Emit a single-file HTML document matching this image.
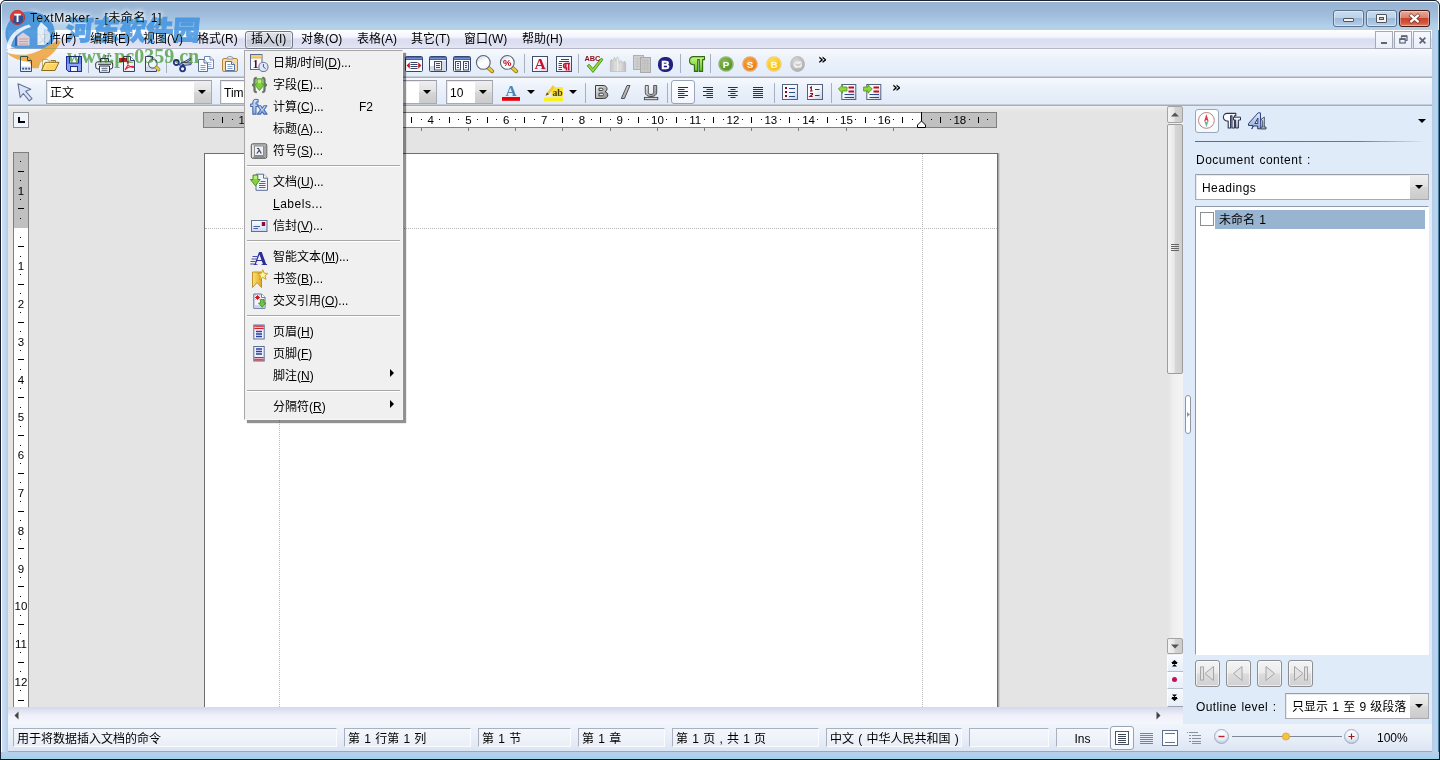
<!DOCTYPE html>
<html lang="zh-CN"><head><meta charset="utf-8"><title>TextMaker - [未命名 1]</title>
<style>
*{box-sizing:border-box;margin:0;padding:0}
html,body{width:1440px;height:760px;overflow:hidden}
body{position:relative;background:#fff;font-family:"Liberation Sans","Noto Sans CJK SC",sans-serif;font-size:12px;color:#000;line-height:1;word-spacing:.9px}
.a{position:absolute}
.t{position:absolute;white-space:nowrap;line-height:16px;height:16px}
u{text-decoration:underline;text-underline-offset:1px}
svg{position:absolute;overflow:visible}
#frame{left:0;top:0;width:1440px;height:760px;border-radius:6px 6px 0 0;background:#b9d3ee;overflow:hidden}
#titlebg{left:0;top:0;width:1440px;height:30px;background:linear-gradient(#1b2233 0,#1b2233 1px,#fdfeff 1px,#fdfeff 2px,#9fb5cf 2px,#98b4d3 4px,#9bb8d8 10px,#a3c0df 17px,#b0d0ec 26px,#b9d0e4 29px,#c0d0de 30px)}
#menubar{left:8px;top:30px;width:1424px;height:19px;background:linear-gradient(#ffffff 0,#f3f4fc 7px,#e9ebf6 8px,#dadef0 9px,#dcdff1 13px,#e4e5f5 18px,#b5b6c8 18px,#b5b6c8 19px)}
.mi{position:absolute;top:31px;height:17px;line-height:17px;white-space:nowrap}
#tb1{left:8px;top:49px;width:1424px;height:29px;background:linear-gradient(#f7fafe 0,#eef3fb 8px,#e6eefa 20px,#e3ecf9 27px,#a9adb8 28px,#a9adb8 29px)}
#tb2{left:8px;top:78px;width:1424px;height:28px;background:linear-gradient(#f6f9fe 0,#edf3fb 8px,#e5edf9 20px,#e2ebf8 26px,#a9adb8 27px,#a9adb8 28px)}
.sep{position:absolute;width:1px;background:#a8b0c0}
#doc{left:8px;top:106px;width:1159px;height:601px;background:linear-gradient(#f0f0f0 0,#e9e9e9 3px,#e4e4e4 6px);overflow:hidden}
.combo{position:absolute;background:#fff;border:1px solid #a8aab4;border-top-color:#9a9ca6;box-shadow:inset 1px 1px 0 #e9eaee}
.cbtn{position:absolute;background:linear-gradient(#efefef,#e2e2e2 48%,#d6d6d6 52%,#cbcbcb)}
.arr{position:absolute;width:0;height:0;border-left:4px solid transparent;border-right:4px solid transparent;border-top:4px solid #000}
</style></head>
<body>
<div id="frame" class="a"></div>
<div id="titlebg" class="a" style="border-radius:6px 6px 0 0"></div>
<div class="a" style="left:0;top:0;width:1440px;height:760px;border:1px solid #1b2233;border-radius:6px 6px 0 0;border-bottom:1px solid #10151c"></div>
<div class="a" style="left:1px;top:1px;width:1438px;height:757px;border:1px solid rgba(255,255,255,.75);border-bottom:none;border-radius:5px 5px 0 0"></div>
<div class="a" style="left:1px;top:30px;width:7px;height:722px;background:linear-gradient(90deg,#ffffff 0,#ffffff 1px,#cfe1f4 1px,#c3d9f0 4px,#b2cdea 7px)"></div>
<div class="a" style="left:1432px;top:30px;width:7px;height:722px;background:linear-gradient(90deg,#b3ceea 0,#b9d3ee 3px,#b6d1ed 6px,#4f7d9d 6px,#4f7d9d 7px)"></div>
<div class="a" style="left:1px;top:752px;width:1438px;height:7px;background:linear-gradient(#b9cfe9,#b2d0ec 3px,#9fd3f0 7px)"></div>
<div id="menubar" class="a"></div>
<div id="tb1" class="a"></div>
<div id="tb2" class="a"></div>
<div class="t" style="left:30px;top:10px;letter-spacing:.55px;text-shadow:0 0 6px #fff,0 0 6px #fff,0 0 4px #fff">TextMaker - [未命名 1]</div>

<div class="a" style="left:1333px;top:10px;width:31px;height:17px;border:1px solid #5b728f;border-radius:3px;background:linear-gradient(#c9dbee 0,#bdd2e9 45%,#9db9d8 50%,#b4cfea 100%);box-shadow:inset 0 0 0 1px rgba(255,255,255,.45)"></div>
<div class="a" style="left:1343px;top:18px;width:11px;height:4px;border:1px solid #50545c;border-radius:1px;background:#f4f4ec"></div>
<div class="a" style="left:1366px;top:10px;width:31px;height:17px;border:1px solid #5b728f;border-radius:3px;background:linear-gradient(#c9dbee 0,#bdd2e9 45%,#9db9d8 50%,#b4cfea 100%);box-shadow:inset 0 0 0 1px rgba(255,255,255,.45)"></div>
<div class="a" style="left:1376px;top:14px;width:11px;height:9px;border:1px solid #50545c;border-radius:1px;background:#f4f4f0"></div>
<div class="a" style="left:1379px;top:17px;width:5px;height:3px;border:1px solid #50545c;background:#b8c8dc"></div>
<div class="a" style="left:1399px;top:10px;width:31px;height:17px;border:1px solid #4a1a14;border-radius:3px;background:linear-gradient(#e9a99a 0,#dc8270 45%,#c8432b 50%,#d4573c 80%,#e0846a 100%);box-shadow:inset 0 0 0 1px rgba(255,255,255,.35)"></div>
<svg class="a" style="left:1408px;top:13px" width="13" height="11" viewBox="0 0 13 11"><path d="M3.200 2.700L9.800 8.300M9.800 2.700L3.200 8.300" stroke="#5a342e" stroke-width="3.800" stroke-linecap="square" opacity=".8"/><path d="M3.200 2.700L9.800 8.300M9.800 2.700L3.200 8.300" stroke="#ffffff" stroke-width="2.300" stroke-linecap="square"/></svg>

<div class="a" style="left:245px;top:31px;width:48px;height:18px;border:1px solid #6f7988;border-radius:3px;background:linear-gradient(#e2e4ec,#d3d6e1 50%,#c6cad7 50%,#cfd3df);box-shadow:inset 0 0 0 1px rgba(255,255,255,.55)"></div>
<div class="mi" style="left:37px">文件(F)</div>
<div class="mi" style="left:90px">编辑(E)</div>
<div class="mi" style="left:143px">视图(V)</div>
<div class="mi" style="left:197px">格式(R)</div>
<div class="mi" style="left:251px">插入(I)</div>
<div class="mi" style="left:301px">对象(O)</div>
<div class="mi" style="left:357px">表格(A)</div>
<div class="mi" style="left:411px">其它(T)</div>
<div class="mi" style="left:464px">窗口(W)</div>
<div class="mi" style="left:522px">帮助(H)</div>

<div class="a" style="left:1375px;top:31px;width:18px;height:18px;border:1px solid #a3a9b6;background:linear-gradient(#f6f8fd,#eaeef8)"></div>
<div class="a" style="left:1380.500px;top:42px;width:6px;height:2px;background:#5d6478"></div>
<div class="a" style="left:1394px;top:31px;width:18px;height:18px;border:1px solid #a3a9b6;background:linear-gradient(#f6f8fd,#eaeef8)"></div>
<svg class="a" style="left:1399px;top:35px" width="9" height="9" viewBox="0 0 9 9"><path d="M2.500 2.800V1H8V5.500H6.500" fill="none" stroke="#5d6478" stroke-width="1.200"/><path d="M2.500 1.200H8" stroke="#5d6478" stroke-width="1.800"/><rect x=".8" y="3.800" width="5.400" height="4.200" fill="none" stroke="#5d6478" stroke-width="1.200"/><path d="M.8 4.200H6.200" stroke="#5d6478" stroke-width="1.600"/></svg>
<div class="a" style="left:1413px;top:31px;width:18px;height:18px;border:1px solid #a3a9b6;background:linear-gradient(#f6f8fd,#eaeef8)"></div>
<svg class="a" style="left:1419px;top:37px" width="7" height="7" viewBox="0 0 7 7"><path d="M.6 .6L6.400 6.400M6.400 .6L.6 6.400" stroke="#5d6478" stroke-width="1.700"/></svg>

<div class="a" style="left:18px;top:56px;width:16px;height:16px"><svg width="16" height="16" viewBox="0 0 16 16" style="left:0;top:0;"><path d="M2.5 .5H9.5L13.5 4.5V15.5H2.5Z" fill="#fff" stroke="#34507c"/><path d="M9.5 .5V4.5H13.5" fill="#e8eef8" stroke="#34507c"/><path d="M3 10H13V15H3Z" fill="#e6edf9"/><rect x="4.2" y="11.6" width="2" height="2" fill="#3a5a9a"/><rect x="7.2" y="11.6" width="2" height="2" fill="#3a5a9a"/><rect x="10.2" y="11.6" width="2" height="2" fill="#3a5a9a"/></svg></div>
<div class="a" style="left:42px;top:56px;width:16px;height:16px"><svg width="16" height="16" viewBox="0 0 16 16" style="left:0;top:0;"><path d="M.5 14.5V3.5H5.5L6.5 5H11.5V7" fill="#fdfdfd" stroke="#b9a36a" stroke-width=".9"/><path d="M9 4.5H13.5V6" fill="#f6d77a" stroke="#8c6d1f" stroke-width=".9"/><path d="M-.5 14.5L3.2 6.3H17L13 14.5Z" fill="#ffd560" stroke="#8c6d1f" stroke-linejoin="round"/><path d="M2.5 12.5L4.6 7.6H14.5" fill="none" stroke="#ffeaa0" stroke-width="1"/></svg></div>
<div class="a" style="left:66px;top:56px;width:16px;height:16px"><svg width="16" height="16" viewBox="0 0 16 16" style="left:0;top:0;"><path d="M.5 .5H15.5V15.5H2.5L.5 13.5Z" fill="#6d87ea" stroke="#1c2d94" stroke-linejoin="round"/><path d="M1 8H15V15H3L1 13Z" fill="#8ea4f2"/><rect x="3.5" y=".5" width="9" height="6.5" fill="#fff" stroke="#1c2d94"/><rect x="4.5" y="10.5" width="7" height="5" fill="#e9edf8" stroke="#1c2d94"/><rect x="6" y="12" width="2.5" height="2.5" fill="#fff"/><path d="M.5 .5H15.5V15.5H2.5L.5 13.5Z" fill="none" stroke="#1c2d94" stroke-linejoin="round"/></svg></div>
<div class="sep" style="left:88px;top:54px;width:1px;height:19px;"></div>
<div class="a" style="left:96px;top:56px;width:16px;height:16px"><svg width="16" height="16" viewBox="0 0 16 16" style="left:0;top:0;"><rect x="9" y="-.8" width="1.4" height="1.4" fill="#2d3a44"/><rect x="11.4" y="-.8" width="1.4" height="1.4" fill="#2d3a44"/><rect x="13.8" y="-.8" width="1.4" height="1.4" fill="#2d3a44"/><path d="M4.5 6V2.5H12.5V6" fill="#fff" stroke="#26323c"/><rect x="-.3" y="5.8" width="17" height="7.2" rx="2.2" fill="#f4f6f8" stroke="#26323c"/><path d="M2 8.3H15" stroke="#3c4852" stroke-width="1.2"/><path d="M3.5 10H13.5V16.3H3.5Z" fill="#fff" stroke="#26323c"/><path d="M5.5 12.2H11.5M5.5 14.2H11.5" stroke="#4e5f86" stroke-width="1.1"/><circle cx="15" cy="7" r=".8" fill="#5aa040"/></svg></div>
<div class="a" style="left:120px;top:56px;width:16px;height:16px"><svg width="16" height="16" viewBox="0 0 16 16" style="left:0;top:0;"><path d="M3.5 .5H10.5L14.5 4.5V15.5H3.5Z" fill="#f6f0f4" stroke="#2f4668"/><path d="M10.5 .5V4.5H14.5" fill="#fff" stroke="#2f4668"/><rect x="-1" y="2" width="8" height="4" fill="#c8201c"/><path d="M5 14C7 11 8.5 8 8.3 6C8.2 5 7.2 5 7.3 6.2C7.6 9 10 11.5 13.2 11.4C14.2 11.2 13.8 10.3 12.6 10.4C9.8 10.6 6.5 12 5 14Z" fill="none" stroke="#d8283a" stroke-width="1.1"/></svg></div>
<div class="a" style="left:144px;top:56px;width:16px;height:16px"><svg width="16" height="16" viewBox="0 0 16 16" style="left:0;top:0;"><path d="M1.500 .5H8.500L12.500 4.500V15.500H1.500Z" fill="#eef0fa" stroke="#2f4668"/><path d="M8.500 .5V4.500H12.500" fill="#fff" stroke="#2f4668"/><path d="M2 10.500H12V15H2Z" fill="#d4d8f2"/><circle cx="8.800" cy="7.800" r="4.300" fill="#f0f7fb" stroke="#4a6a5c" stroke-width="1.100"/><path d="M12.300 11.300L14.600 13.600" stroke="#a88a20" stroke-width="3.600" stroke-linecap="round"/><path d="M12.500 11.500L14.500 13.500" stroke="#ecc83c" stroke-width="2.300" stroke-linecap="round"/></svg></div>
<div class="sep" style="left:166px;top:54px;width:1px;height:19px;"></div>
<div class="a" style="left:174px;top:56px;width:16px;height:16px"><svg width="16" height="16" viewBox="0 0 16 16" style="left:0;top:0;"><path d="M4.500 8.800L16.500 2.200L17 3.600L8 9.500Z" fill="#aab4d0" stroke="#2b3a78" stroke-width=".9" stroke-linejoin="round"/><path d="M7 6.300L17.300 7L17 8.600L9.500 9.500Z" fill="#c2cae0" stroke="#2b3a78" stroke-width=".9" stroke-linejoin="round"/><circle cx="2.300" cy="6.500" r="2.500" fill="#eef2fa" stroke="#23357e" stroke-width="1.800"/><circle cx="8.600" cy="12.800" r="2.500" fill="#eef2fa" stroke="#23357e" stroke-width="1.800"/><path d="M8.800 10.500L9.500 8" stroke="#23357e" stroke-width="1.800"/></svg></div>
<div class="a" style="left:198px;top:56px;width:16px;height:16px"><svg width="16" height="16" viewBox="0 0 16 16" style="left:0;top:0;"><path d="M6.500 .5H12L15.500 4V12.500H6.500Z" fill="#fbfcff" stroke="#6e86a8"/><path d="M12 .5V4H15.500" fill="#e8eef8" stroke="#6e86a8"/><path d="M8.500 6.500H13.500M8.500 8.500H13.500M8.500 10.500H13.500" stroke="#9fb3d4"/><path d="M.5 3.500H6L9.500 7V15.500H.5Z" fill="#fbfcff" stroke="#5a7296"/><path d="M6 3.500V7H9.500" fill="#e8eef8" stroke="#5a7296"/><path d="M2.500 9.500H7.500M2.500 11.500H7.500M2.500 13.500H7.500" stroke="#7f9ccc"/></svg></div>
<div class="a" style="left:222px;top:56px;width:16px;height:16px"><svg width="16" height="16" viewBox="0 0 16 16" style="left:0;top:0;"><rect x=".5" y="2.500" width="15" height="13" rx="1.500" fill="#f6d9a6" stroke="#b4873c"/><path d="M5 3V1.500Q8 -1 11 1.500V3Z" fill="#e9edf4" stroke="#8a8f98" stroke-width=".9"/><path d="M3.500 5.500H9.500L12.500 8.500V14.500H3.500Z" fill="#fff" stroke="#5a7296"/><path d="M9.500 5.500V8.500H12.500" fill="#e8eef8" stroke="#5a7296"/><path d="M5.500 8.500H8.500M5.500 10.500H10.500M5.500 12.500H10.500" stroke="#7f9ccc"/></svg></div>
<div class="a" style="left:405px;top:56px;width:16px;height:16px"><svg width="18" height="16" viewBox="0 0 18 16" style="left:0;top:0;"><defs><linearGradient id="wt" x1="0" y1="0" x2="0" y2="1"><stop offset="0" stop-color="#3a56b0"/><stop offset="1" stop-color="#9ab0ee"/></linearGradient></defs><rect x=".5" y=".5" width="17" height="15" rx="1" fill="#fbfcfe" stroke="#33466e"/><rect x="1" y="1" width="16" height="2.500" fill="url(#wt)"/><path d="M1 3.500H17" stroke="#33466e" stroke-width=".8"/><path d="M5.500 6.500H12.500M5.500 8.500H12.500M5.500 10.500H12.500M5.500 12.500H12.500" stroke="#39466a" stroke-width="1"/><path d="M1.600 9.500L4.800 6.300V12.700Z" fill="#d0101c"/><path d="M16.400 9.500L13.200 6.300V12.700Z" fill="#d0101c"/></svg></div>
<div class="a" style="left:429px;top:56px;width:16px;height:16px"><svg width="18" height="16" viewBox="0 0 18 16" style="left:0;top:0;"><defs><linearGradient id="wt" x1="0" y1="0" x2="0" y2="1"><stop offset="0" stop-color="#3a56b0"/><stop offset="1" stop-color="#9ab0ee"/></linearGradient></defs><rect x=".5" y=".5" width="17" height="15" rx="1" fill="#fbfcfe" stroke="#33466e"/><rect x="1" y="1" width="16" height="2.500" fill="url(#wt)"/><path d="M1 3.500H17" stroke="#33466e" stroke-width=".8"/><path d="M1 10H5V15H1ZM13 5H17V15H13Z" fill="#d8dbe2"/><rect x="5.500" y="5.500" width="7" height="8.500" fill="#f4f5f8" stroke="#444e68"/><path d="M7 7.500H11M7 9.500H11M7 11.500H11" stroke="#444e68" stroke-width="1"/></svg></div>
<div class="a" style="left:453px;top:56px;width:16px;height:16px"><svg width="18" height="16" viewBox="0 0 18 16" style="left:0;top:0;"><defs><linearGradient id="wt" x1="0" y1="0" x2="0" y2="1"><stop offset="0" stop-color="#3a56b0"/><stop offset="1" stop-color="#9ab0ee"/></linearGradient></defs><rect x=".5" y=".5" width="17" height="15" rx="1" fill="#fbfcfe" stroke="#33466e"/><rect x="1" y="1" width="16" height="2.500" fill="url(#wt)"/><path d="M1 3.500H17" stroke="#33466e" stroke-width=".8"/><rect x="2.500" y="5.500" width="5" height="8.500" fill="#f4f5f8" stroke="#444e68"/><rect x="10.500" y="5.500" width="5" height="8.500" fill="#f4f5f8" stroke="#444e68"/><path d="M4 7.500H6M4 9.500H6M4 11.500H6M12 7.500H14M12 9.500H14M12 11.500H14" stroke="#444e68" stroke-width="1"/></svg></div>
<div class="a" style="left:477px;top:56px;width:16px;height:16px"><svg width="18" height="18" viewBox="0 0 18 18" style="left:0;top:0;left:-1px;top:-1px"><defs><linearGradient id="lg" x1="0" y1="0" x2="0.600" y2="1"><stop offset="0" stop-color="#c4d4e4"/><stop offset=".55" stop-color="#ffffff"/><stop offset="1" stop-color="#f4f8fc"/></linearGradient></defs><path d="M12 12.500L16.200 16.200" stroke="#8a7420" stroke-width="4" stroke-linecap="round"/><path d="M12.300 12.800L16 16" stroke="#e8c838" stroke-width="2.600" stroke-linecap="round"/><circle cx="7.300" cy="7.400" r="6.900" fill="url(#lg)" stroke="#5a6470" stroke-width="1.100"/></svg></div>
<div class="a" style="left:501px;top:56px;width:16px;height:16px"><svg width="18" height="18" viewBox="0 0 18 18" style="left:0;top:0;left:-1px;top:-1px"><defs><linearGradient id="lg" x1="0" y1="0" x2="0.600" y2="1"><stop offset="0" stop-color="#c4d4e4"/><stop offset=".55" stop-color="#ffffff"/><stop offset="1" stop-color="#f4f8fc"/></linearGradient></defs><path d="M12 12.500L16.200 16.200" stroke="#8a7420" stroke-width="4" stroke-linecap="round"/><path d="M12.300 12.800L16 16" stroke="#e8c838" stroke-width="2.600" stroke-linecap="round"/><circle cx="7.300" cy="7.400" r="6.900" fill="url(#lg)" stroke="#5a6470" stroke-width="1.100"/><text x="7.300" y="10.800" text-anchor="middle" font-family="Liberation Sans, sans-serif" font-weight="bold" font-size="9.500" fill="#c00818">%</text></svg></div>
<div class="sep" style="left:524px;top:54px;width:1px;height:19px;"></div>
<div class="a" style="left:532px;top:56px;width:16px;height:16px"><svg width="16" height="16" viewBox="0 0 16 16" style="left:0;top:0;"><defs><linearGradient id="bg1" x1="0" y1="0" x2="1" y2="1"><stop offset="0" stop-color="#ffffff"/><stop offset=".5" stop-color="#fbfbfe"/><stop offset="1" stop-color="#c9d3ea"/></linearGradient></defs><rect x=".5" y=".5" width="15" height="15" fill="url(#bg1)" stroke="#3e4f6e"/><text x="8" y="13.300" text-anchor="middle" font-family="Liberation Serif, serif" font-weight="bold" font-size="15.500" fill="#c8102c">A</text></svg></div>
<div class="a" style="left:556px;top:56px;width:16px;height:16px"><svg width="16" height="16" viewBox="0 0 16 16" style="left:0;top:0;"><defs><linearGradient id="bg1" x1="0" y1="0" x2="1" y2="1"><stop offset="0" stop-color="#ffffff"/><stop offset=".5" stop-color="#fbfbfe"/><stop offset="1" stop-color="#c9d3ea"/></linearGradient></defs><rect x=".5" y=".5" width="15" height="15" fill="url(#bg1)" stroke="#3e4f6e"/><path d="M5 3.500H13M3 5.500H13" stroke="#2e4a86" stroke-width="1"/><path d="M2.500 7.500H6M2.500 9.500H6M2.500 11.500H6M2.500 13.500H6" stroke="#2e4a86" stroke-width="1"/><path d="M14 7.500H9.800A2.200 2.200 0 0 0 9.800 11.900H10.500V14.500M12.700 7.500V14.500" fill="none" stroke="#c8102c" stroke-width="1.500"/><path d="M9.800 8A1.800 1.800 0 0 0 9.800 11.400H10.500V8Z" fill="#c8102c"/></svg></div>
<div class="sep" style="left:578px;top:54px;width:1px;height:19px;"></div>
<div class="a" style="left:585px;top:56px;width:16px;height:16px"><svg width="18" height="18" viewBox="0 0 18 18" style="left:0;top:0;left:1px;top:0px"><text x="-1.400" y="5.300" font-family="Liberation Sans, sans-serif" font-weight="bold" font-size="7.400" fill="#8c1420" letter-spacing="-.2">ABC</text><path d="M1.200 9.800L3.200 8.300L6.800 12.500L15.200 2.200L17 3.500L7 16.500Z" fill="#8fdc3a" stroke="#3f8a12" stroke-width=".9" stroke-linejoin="round"/></svg></div>
<div class="a" style="left:610px;top:56px;width:16px;height:16px"><svg width="16" height="16" viewBox="0 0 16 16" style="left:0;top:0;"><defs><linearGradient id="gg" x1="0" y1="0" x2="1" y2="0"><stop offset="0" stop-color="#c4c4c4"/><stop offset=".5" stop-color="#ececec"/><stop offset="1" stop-color="#bdbdbd"/></linearGradient></defs><path d="M.3 15.500V5L1.500 3.200L2.600 5H3L4.500 1.200L6 5V3.500L7.500 .800L9 3.500V7H9.500L11 4.500L12.500 7H13L14.500 5L15.700 7V15.500Z" fill="url(#gg)" stroke="#b4b4b4" stroke-width=".6"/><path d="M3.300 5V15.500M6.200 4V15.500M9.200 7V15.500M12.700 7V15.500" stroke="#cfcfcf" stroke-width=".8"/></svg></div>
<div class="a" style="left:634px;top:56px;width:16px;height:16px"><svg width="18" height="18" viewBox="0 0 18 18" style="left:0;top:0;left:0px;top:0px"><rect x="-.5" y="-.5" width="10" height="14" fill="#d0d0d0" stroke="#b0b0b0"/><path d="M1 3H8M1 5.500H8M1 8H8M1 10.500H8M3.500 1V13M6.500 1V13" stroke="#c2c2c2" stroke-width=".7"/><rect x="6.500" y="1.500" width="10" height="15" fill="#c8c8c8" stroke="#a9a9a9"/><path d="M8 5H15M8 7.500H15M8 10H15M8 12.500H15M10.500 3V15M13.500 3V15" stroke="#bbbbbb" stroke-width=".7"/></svg></div>
<div class="a" style="left:658px;top:56px;width:16px;height:16px"><svg width="16" height="16" viewBox="0 0 16 16" style="left:0;top:0;"><rect x="0" y="1" width="15" height="15" rx="6.500" fill="#22227e"/><text x="7.500" y="12.700" text-anchor="middle" font-family="Liberation Sans, sans-serif" font-weight="bold" font-size="11.500" fill="#fff" stroke="#fff" stroke-width=".5">B</text></svg></div>
<div class="sep" style="left:680px;top:54px;width:1px;height:19px;"></div>
<div class="a" style="left:688px;top:56px;width:16px;height:16px"><svg width="17" height="16" viewBox="0 0 17 16" style="left:0;top:0;"><defs><linearGradient id="pg" x1="0" y1="0" x2="0" y2="1"><stop offset="0" stop-color="#c8f490"/><stop offset=".5" stop-color="#8ede48"/><stop offset="1" stop-color="#5cbc20"/></linearGradient></defs><path d="M16.500 .600V3.600H14.600V15.400H11.300V3.600H9.700V15.400H6.400V8.700H5A4.100 4.100 0 0 1 5 .600Z" fill="url(#pg)" stroke="#2f6a10" stroke-width="1.100" stroke-linejoin="round"/></svg></div>
<div class="sep" style="left:710px;top:54px;width:1px;height:19px;"></div>
<div class="a" style="left:718px;top:56px;width:16px;height:16px"><svg width="16" height="16" viewBox="0 0 16 16" style="left:0;top:0;"><defs><radialGradient id="cgP8cc05a" cx=".4" cy=".35" r=".75"><stop offset="0" stop-color="#8cc05a"/><stop offset=".7" stop-color="#5f9a2c"/><stop offset="1" stop-color="#4a8420"/></radialGradient></defs><circle cx="8" cy="8" r="7.800" fill="#4a8420" opacity=".55"/><circle cx="8" cy="8" r="6.600" fill="url(#cgP8cc05a)" stroke="#8cc05a" stroke-width=".7"/><text x="8" y="11.600" text-anchor="middle" font-family="Liberation Sans, sans-serif" font-weight="bold" font-size="9.800" fill="#fff">P</text></svg></div>
<div class="a" style="left:742px;top:56px;width:16px;height:16px"><svg width="16" height="16" viewBox="0 0 16 16" style="left:0;top:0;"><defs><radialGradient id="cgSf8a848" cx=".4" cy=".35" r=".75"><stop offset="0" stop-color="#f8a848"/><stop offset=".7" stop-color="#ee841c"/><stop offset="1" stop-color="#e06c10"/></radialGradient></defs><circle cx="8" cy="8" r="7.800" fill="#e06c10" opacity=".55"/><circle cx="8" cy="8" r="6.600" fill="url(#cgSf8a848)" stroke="#f8a848" stroke-width=".7"/><text x="8" y="11.600" text-anchor="middle" font-family="Liberation Sans, sans-serif" font-weight="bold" font-size="9.800" fill="#fff">S</text></svg></div>
<div class="a" style="left:766px;top:56px;width:16px;height:16px"><svg width="16" height="16" viewBox="0 0 16 16" style="left:0;top:0;"><defs><radialGradient id="cgBfce068" cx=".4" cy=".35" r=".75"><stop offset="0" stop-color="#fce068"/><stop offset=".7" stop-color="#f8c420"/><stop offset="1" stop-color="#eeb010"/></radialGradient></defs><circle cx="8" cy="8" r="7.800" fill="#eeb010" opacity=".55"/><circle cx="8" cy="8" r="6.600" fill="url(#cgBfce068)" stroke="#fce068" stroke-width=".7"/><text x="8" y="11.600" text-anchor="middle" font-family="Liberation Sans, sans-serif" font-weight="bold" font-size="9.800" fill="#fff8d0">B</text></svg></div>
<div class="a" style="left:790px;top:56px;width:16px;height:16px"><svg width="16" height="16" viewBox="0 0 16 16" style="left:0;top:0;"><defs><radialGradient id="gmg" cx=".4" cy=".35" r=".75"><stop offset="0" stop-color="#d8d8d8"/><stop offset="1" stop-color="#a8a8a8"/></radialGradient></defs><ellipse cx="7.500" cy="8" rx="7.400" ry="7.900" fill="url(#gmg)"/><path d="M3.500 9C3.500 6 6 4.500 8 5.500C10 4 12.500 5.500 11.500 8C13 10 11 12.500 8.500 11.500C6 13 3.500 11.500 3.500 9Z" fill="#ececec"/><path d="M5.500 8C7 9.500 9 9.500 10.500 8" stroke="#b0b0b0" fill="none"/></svg></div>
<div class="t" style="left:818px;top:51px;font-weight:bold;font-size:14px;font-family:'DejaVu Sans',sans-serif">»</div>
<div class="a" style="left:17px;top:83px;width:16px;height:16px"><svg width="17" height="19" viewBox="0 0 17 19" style="left:0;top:0;"><path d="M1 .8L13.800 6.200L8.800 8.300L15 15.500L12.300 17.800L6.300 10.500L3.200 14.500Z" fill="#dbe3f6" stroke="#62729a" stroke-width="1.100" stroke-linejoin="round"/></svg></div>
<div class="combo" style="left:46px;top:80px;width:166px;height:24px;"></div>
<div class="cbtn" style="left:194px;top:81px;width:17px;height:22px;"></div>
<div class="arr" style="left:198px;top:90px"></div>
<div class="t" style="left:50px;top:85px;">正文</div>
<div class="combo" style="left:220px;top:80px;width:217px;height:24px;"></div>
<div class="cbtn" style="left:419px;top:81px;width:17px;height:22px;"></div>
<div class="arr" style="left:423px;top:90px"></div>
<div class="t" style="left:224px;top:85px;">Times New Roman</div>
<div class="combo" style="left:446px;top:80px;width:47px;height:24px;"></div>
<div class="cbtn" style="left:475px;top:81px;width:17px;height:22px;"></div>
<div class="arr" style="left:479px;top:90px"></div>
<div class="t" style="left:450px;top:85px;">10</div>
<div class="a" style="left:502px;top:84px;width:16px;height:16px"><svg width="18" height="17" viewBox="0 0 18 17" style="left:0;top:0;"><text x="9" y="11.800" text-anchor="middle" font-family="Liberation Serif, serif" font-weight="bold" font-size="15.500" fill="#4a88b6">A</text><rect x="0" y="13" width="18" height="3.800" fill="#e8000c"/></svg></div>
<div class="arr" style="left:526.500px;top:90px"></div>
<div class="a" style="left:544px;top:84px;width:16px;height:16px"><svg width="19" height="18" viewBox="0 0 19 18" style="left:0;top:0;"><rect x="7.500" y="3.200" width="11.500" height="9.300" fill="#f8e43a"/><rect x="0" y="13.400" width="19" height="3.800" rx="1" fill="#faf01e"/><path d="M1.500 11.800L3 8.500L8.800 1.200L11 3L5 10.300Z" fill="#f2c64e"/><path d="M1.500 11.800L3 8.500L5 10.300Z" fill="#5a4a2a"/><text x="13.600" y="11.600" text-anchor="middle" font-family="Liberation Serif, serif" font-weight="bold" font-size="9.800" fill="#4a3a08">ab</text></svg></div>
<div class="arr" style="left:568.500px;top:90px"></div>
<div class="sep" style="left:585px;top:83px;width:1px;height:20px;"></div>
<div class="a" style="left:593px;top:84px;width:16px;height:16px"><svg width="16" height="16" viewBox="0 0 16 16" style="left:0;top:0;"><defs><linearGradient id="biu" x1="0" y1="0" x2="1" y2="1"><stop offset="0" stop-color="#f4f4f4"/><stop offset=".5" stop-color="#b8b8b8"/><stop offset="1" stop-color="#8a8a8a"/></linearGradient></defs><path d="M2.500 1.500H10C12.800 1.500 14 3 14 4.800C14 6.300 13.200 7.300 12 7.700C13.600 8.100 14.800 9.200 14.800 11C14.800 13.200 13.200 14.500 10.500 14.500H2.500ZM6 4.200V6.500H8.800C10.400 6.500 10.400 4.200 8.800 4.200ZM6 9.200V11.800H9.200C11 11.800 11 9.200 9.200 9.200Z" fill="url(#biu)" stroke="#3c3c3c" stroke-width="1" stroke-linejoin="round" fill-rule="evenodd"/></svg></div>
<div class="a" style="left:617px;top:84px;width:16px;height:16px"><svg width="16" height="16" viewBox="0 0 16 16" style="left:0;top:0;"><defs><linearGradient id="biu" x1="0" y1="0" x2="1" y2="1"><stop offset="0" stop-color="#f4f4f4"/><stop offset=".5" stop-color="#b8b8b8"/><stop offset="1" stop-color="#8a8a8a"/></linearGradient></defs><path d="M10 1.500H13L7.500 14.500H4.300Z" fill="url(#biu)" stroke="#444" stroke-width=".9" stroke-linejoin="round"/></svg></div>
<div class="a" style="left:643px;top:84px;width:16px;height:16px"><svg width="16" height="16" viewBox="0 0 16 16" style="left:0;top:0;"><defs><linearGradient id="biu" x1="0" y1="0" x2="1" y2="1"><stop offset="0" stop-color="#f4f4f4"/><stop offset=".5" stop-color="#b8b8b8"/><stop offset="1" stop-color="#8a8a8a"/></linearGradient></defs><path d="M2.300 1.500H5.300V8.200C5.300 11.300 10.700 11.300 10.700 8.200V1.500H13.700V8.500C13.700 14 2.300 14 2.300 8.500Z" fill="url(#biu)" stroke="#444" stroke-width=".9" stroke-linejoin="round"/><rect x="1.400" y="13.400" width="13.400" height="2.300" fill="#d8d8d8" stroke="#444" stroke-width=".9"/></svg></div>
<div class="sep" style="left:667px;top:83px;width:1px;height:20px;"></div>
<div class="a" style="left:671px;top:80px;width:24px;height:24px;border:1px solid #9aa6b8;border-radius:3px;background:linear-gradient(#fdfeff,#f2f6fc)"></div>
<div class="a" style="left:675px;top:84px;width:16px;height:16px"><svg width="16" height="16" viewBox="0 0 16 16" style="left:0;top:0;"><rect x="3" y="3" width="10" height="1" fill="#2e3050"/><rect x="3" y="5" width="6.5" height="1" fill="#2e3050"/><rect x="3" y="7" width="10" height="1" fill="#2e3050"/><rect x="3" y="9" width="6.5" height="1" fill="#2e3050"/><rect x="3" y="11" width="10" height="1" fill="#2e3050"/><rect x="3" y="13" width="6.5" height="1" fill="#2e3050"/></svg></div>
<div class="a" style="left:700px;top:84px;width:16px;height:16px"><svg width="16" height="16" viewBox="0 0 16 16" style="left:0;top:0;"><rect x="3" y="3" width="10" height="1" fill="#2e3050"/><rect x="6.5" y="5" width="6.5" height="1" fill="#2e3050"/><rect x="3" y="7" width="10" height="1" fill="#2e3050"/><rect x="6.5" y="9" width="6.5" height="1" fill="#2e3050"/><rect x="3" y="11" width="10" height="1" fill="#2e3050"/><rect x="6.5" y="13" width="6.5" height="1" fill="#2e3050"/></svg></div>
<div class="a" style="left:725px;top:84px;width:16px;height:16px"><svg width="16" height="16" viewBox="0 0 16 16" style="left:0;top:0;"><rect x="3" y="3" width="9.7" height="1" fill="#2e3050"/><rect x="5.5" y="5" width="5.0" height="1" fill="#2e3050"/><rect x="3" y="7" width="9.7" height="1" fill="#2e3050"/><rect x="5.5" y="9" width="5.0" height="1" fill="#2e3050"/><rect x="3" y="11" width="9.7" height="1" fill="#2e3050"/><rect x="5.5" y="13" width="5.0" height="1" fill="#2e3050"/></svg></div>
<div class="a" style="left:750px;top:84px;width:16px;height:16px"><svg width="16" height="16" viewBox="0 0 16 16" style="left:0;top:0;"><rect x="3" y="3" width="10" height="1" fill="#2e3050"/><rect x="3" y="5" width="10" height="1" fill="#2e3050"/><rect x="3" y="7" width="10" height="1" fill="#2e3050"/><rect x="3" y="9" width="10" height="1" fill="#2e3050"/><rect x="3" y="11" width="10" height="1" fill="#2e3050"/><rect x="3" y="13" width="10" height="1" fill="#2e3050"/></svg></div>
<div class="sep" style="left:774px;top:83px;width:1px;height:20px;"></div>
<div class="a" style="left:782px;top:84px;width:16px;height:16px"><svg width="16" height="16" viewBox="0 0 16 16" style="left:0;top:0;"><defs><linearGradient id="bg2" x1="0" y1="0" x2="1" y2="1"><stop offset="0" stop-color="#ffffff"/><stop offset=".5" stop-color="#f6f7fc"/><stop offset="1" stop-color="#c4d0ea"/></linearGradient></defs><rect x=".5" y=".5" width="15" height="15" fill="url(#bg2)" stroke="#55627e"/><rect x="3" y="3" width="2" height="2" fill="#7a0a14"/><rect x="3" y="7" width="2" height="2" fill="#7a0a14"/><rect x="3" y="11" width="2" height="2" fill="#7a0a14"/><path d="M7 4.500H13M7 8.500H13M7 12.500H13" stroke="#2e4a86" stroke-width="1.100"/></svg></div>
<div class="a" style="left:807px;top:84px;width:16px;height:16px"><svg width="16" height="16" viewBox="0 0 16 16" style="left:0;top:0;"><defs><linearGradient id="bg2" x1="0" y1="0" x2="1" y2="1"><stop offset="0" stop-color="#ffffff"/><stop offset=".5" stop-color="#f6f7fc"/><stop offset="1" stop-color="#c4d0ea"/></linearGradient></defs><rect x=".5" y=".5" width="15" height="15" fill="url(#bg2)" stroke="#55627e"/><path d="M3 4L4.300 3V7M3 7H5.600" fill="none" stroke="#8a0a18" stroke-width="1.200"/><path d="M3 9.500H5.500V10.500L3 12.500H5.700" fill="none" stroke="#8a0a18" stroke-width="1.200"/><path d="M8 5.500H12.500M8 11.500H12.500" stroke="#33415e" stroke-width="1.200"/></svg></div>
<div class="sep" style="left:831px;top:83px;width:1px;height:20px;"></div>
<div class="a" style="left:838px;top:84px;width:16px;height:16px"><svg width="18" height="16" viewBox="0 0 18 16" style="left:0;top:0;"><defs><linearGradient id="bg2" x1="0" y1="0" x2="1" y2="1"><stop offset="0" stop-color="#ffffff"/><stop offset=".5" stop-color="#f6f7fc"/><stop offset="1" stop-color="#c4d0ea"/></linearGradient></defs><rect x="3.800" y=".5" width="14" height="15" fill="url(#bg2)" stroke="#55627e"/><rect x="10.500" y="2.500" width="5.500" height="2" fill="#c00c18"/><rect x="10.500" y="6.500" width="5.500" height="2" fill="#c00c18"/><path d="M6.500 10.500H16M6.500 13.500H16" stroke="#2e4a86" stroke-width="1.100"/><path d="M.4 5L4.600 .8V3H9V7H4.600V9.200Z" fill="#8ed83e" stroke="#4f8f1c" stroke-width=".8" stroke-linejoin="round"/></svg></div>
<div class="a" style="left:863px;top:84px;width:16px;height:16px"><svg width="18" height="16" viewBox="0 0 18 16" style="left:0;top:0;"><defs><linearGradient id="bg2" x1="0" y1="0" x2="1" y2="1"><stop offset="0" stop-color="#ffffff"/><stop offset=".5" stop-color="#f6f7fc"/><stop offset="1" stop-color="#c4d0ea"/></linearGradient></defs><rect x="3.800" y=".5" width="14" height="15" fill="url(#bg2)" stroke="#55627e"/><rect x="10.500" y="2.500" width="5.500" height="2" fill="#c00c18"/><rect x="10.500" y="6.500" width="5.500" height="2" fill="#c00c18"/><path d="M6.500 10.500H16M6.500 13.500H16" stroke="#2e4a86" stroke-width="1.100"/><path d="M9.300 5L5 .8V3H.6V7H5V9.200Z" fill="#8ed83e" stroke="#4f8f1c" stroke-width=".8" stroke-linejoin="round"/></svg></div>
<div class="t" style="left:892px;top:79px;font-weight:bold;font-size:14px;font-family:'DejaVu Sans',sans-serif">»</div>
<div id="doc" class="a"></div>
<div class="a" style="left:13px;top:112px;width:16px;height:16px;background:#eef3fc;border:1px solid #8c8c8c"></div>
<div class="a" style="left:18px;top:117px;width:2px;height:6px;background:#000"></div>
<div class="a" style="left:18px;top:121px;width:7px;height:2px;background:#000"></div>
<div class="a" style="left:204px;top:153px;width:794px;height:560px;background:#fff;border:1px solid #6e6e6e;border-bottom:none;box-shadow:1px 0 0 #a8a8a8,2px 0 0 #cfcfcf"></div>
<div class="a" style="left:279px;top:154px;width:1px;height:553px;border-left:1px dotted #b8b8b8"></div>
<div class="a" style="left:922px;top:154px;width:1px;height:553px;border-left:1px dotted #b8b8b8"></div>
<div class="a" style="left:205px;top:228px;width:792px;height:1px;border-top:1px dotted #b8b8b8"></div>
<div class="a" style="left:203px;top:112px;width:794px;height:16px;background:#fff;border:1px solid #7f7f7f"></div>
<div class="a" style="left:204px;top:113px;width:75px;height:14px;background:#c0c0c0"></div>
<div class="a" style="left:922px;top:113px;width:74px;height:14px;background:#c0c0c0"></div>
<svg class="a" style="left:203px;top:112px" width="795" height="20" font-family="Liberation Sans, sans-serif" font-size="11.5" fill="#000"><rect x="10" y="7" width="1" height="1"/><rect x="19" y="5" width="1" height="6"/><rect x="29" y="7" width="1" height="1"/><text x="38.7" y="12.2" text-anchor="middle">1</text><rect x="47" y="7" width="1" height="1"/><rect x="57" y="5" width="1" height="6"/><rect x="66" y="7" width="1" height="1"/><rect x="85" y="7" width="1" height="1"/><rect x="95" y="5" width="1" height="6"/><rect x="104" y="7" width="1" height="1"/><text x="114.3" y="12.2" text-anchor="middle">1</text><rect x="123" y="7" width="1" height="1"/><rect x="132" y="5" width="1" height="6"/><rect x="142" y="7" width="1" height="1"/><text x="152.1" y="12.2" text-anchor="middle">2</text><rect x="161" y="7" width="1" height="1"/><rect x="170" y="5" width="1" height="6"/><rect x="180" y="7" width="1" height="1"/><text x="189.9" y="12.2" text-anchor="middle">3</text><rect x="199" y="7" width="1" height="1"/><rect x="208" y="5" width="1" height="6"/><rect x="218" y="7" width="1" height="1"/><text x="227.7" y="12.2" text-anchor="middle">4</text><rect x="236" y="7" width="1" height="1"/><rect x="246" y="5" width="1" height="6"/><rect x="255" y="7" width="1" height="1"/><text x="265.5" y="12.2" text-anchor="middle">5</text><rect x="274" y="7" width="1" height="1"/><rect x="284" y="5" width="1" height="6"/><rect x="293" y="7" width="1" height="1"/><text x="303.3" y="12.2" text-anchor="middle">6</text><rect x="312" y="7" width="1" height="1"/><rect x="321" y="5" width="1" height="6"/><rect x="331" y="7" width="1" height="1"/><text x="341.1" y="12.2" text-anchor="middle">7</text><rect x="350" y="7" width="1" height="1"/><rect x="359" y="5" width="1" height="6"/><rect x="369" y="7" width="1" height="1"/><text x="378.9" y="12.2" text-anchor="middle">8</text><rect x="388" y="7" width="1" height="1"/><rect x="397" y="5" width="1" height="6"/><rect x="407" y="7" width="1" height="1"/><text x="416.7" y="12.2" text-anchor="middle">9</text><rect x="425" y="7" width="1" height="1"/><rect x="435" y="5" width="1" height="6"/><rect x="444" y="7" width="1" height="1"/><text x="454.5" y="12.2" text-anchor="middle">10</text><rect x="463" y="7" width="1" height="1"/><rect x="473" y="5" width="1" height="6"/><rect x="482" y="7" width="1" height="1"/><text x="492.2" y="12.2" text-anchor="middle">11</text><rect x="501" y="7" width="1" height="1"/><rect x="510" y="5" width="1" height="6"/><rect x="520" y="7" width="1" height="1"/><text x="530.0" y="12.2" text-anchor="middle">12</text><rect x="539" y="7" width="1" height="1"/><rect x="548" y="5" width="1" height="6"/><rect x="558" y="7" width="1" height="1"/><text x="567.8" y="12.2" text-anchor="middle">13</text><rect x="577" y="7" width="1" height="1"/><rect x="586" y="5" width="1" height="6"/><rect x="595" y="7" width="1" height="1"/><text x="605.6" y="12.2" text-anchor="middle">14</text><rect x="614" y="7" width="1" height="1"/><rect x="624" y="5" width="1" height="6"/><rect x="633" y="7" width="1" height="1"/><text x="643.4" y="12.2" text-anchor="middle">15</text><rect x="652" y="7" width="1" height="1"/><rect x="662" y="5" width="1" height="6"/><rect x="671" y="7" width="1" height="1"/><text x="681.2" y="12.2" text-anchor="middle">16</text><rect x="690" y="7" width="1" height="1"/><rect x="699" y="5" width="1" height="6"/><rect x="709" y="7" width="1" height="1"/><rect x="728" y="7" width="1" height="1"/><rect x="737" y="5" width="1" height="6"/><rect x="747" y="7" width="1" height="1"/><text x="756.8" y="12.2" text-anchor="middle">18</text><rect x="766" y="7" width="1" height="1"/><rect x="775" y="5" width="1" height="6"/><rect x="784" y="7" width="1" height="1"/></svg>
<svg class="a" style="left:203px;top:128px" width="795" height="4" fill="#7a7a7a"><rect x="123" y="0" width="1" height="3"/><rect x="170" y="0" width="1" height="3"/><rect x="218" y="0" width="1" height="3"/><rect x="265" y="0" width="1" height="3"/><rect x="312" y="0" width="1" height="3"/><rect x="359" y="0" width="1" height="3"/><rect x="407" y="0" width="1" height="3"/><rect x="454" y="0" width="1" height="3"/><rect x="501" y="0" width="1" height="3"/><rect x="548" y="0" width="1" height="3"/><rect x="595" y="0" width="1" height="3"/><rect x="643" y="0" width="1" height="3"/><rect x="690" y="0" width="1" height="3"/></svg>
<svg class="a" style="left:914.500px;top:112px" width="12" height="16"><path d="M6.5 0V9M6.5 9L2.5 13V15.5H10.5V13Z" fill="#fff" stroke="#000" stroke-width="1"/></svg>
<div class="a" style="left:13px;top:152px;width:16px;height:560px;background:#fff;border:1px solid #7f7f7f;border-bottom:none"></div>
<div class="a" style="left:14px;top:153px;width:14px;height:75px;background:#c0c0c0"></div>
<svg class="a" style="left:13px;top:152px" width="17" height="555" font-family="Liberation Sans, sans-serif" font-size="11.5" fill="#000"><rect x="7" y="9" width="1" height="1"/><rect x="5" y="19" width="6" height="1"/><rect x="7" y="28" width="1" height="1"/><text x="8" y="42.6" text-anchor="middle">1</text><rect x="7" y="47" width="1" height="1"/><rect x="5" y="56" width="6" height="1"/><rect x="7" y="66" width="1" height="1"/><rect x="7" y="85" width="1" height="1"/><rect x="5" y="94" width="6" height="1"/><rect x="7" y="104" width="1" height="1"/><text x="8" y="118.2" text-anchor="middle">1</text><rect x="7" y="122" width="1" height="1"/><rect x="5" y="132" width="6" height="1"/><rect x="7" y="141" width="1" height="1"/><text x="8" y="156.0" text-anchor="middle">2</text><rect x="7" y="160" width="1" height="1"/><rect x="5" y="170" width="6" height="1"/><rect x="7" y="179" width="1" height="1"/><text x="8" y="193.8" text-anchor="middle">3</text><rect x="7" y="198" width="1" height="1"/><rect x="5" y="207" width="6" height="1"/><rect x="7" y="217" width="1" height="1"/><text x="8" y="231.6" text-anchor="middle">4</text><rect x="7" y="236" width="1" height="1"/><rect x="5" y="245" width="6" height="1"/><rect x="7" y="255" width="1" height="1"/><text x="8" y="269.4" text-anchor="middle">5</text><rect x="7" y="274" width="1" height="1"/><rect x="5" y="283" width="6" height="1"/><rect x="7" y="293" width="1" height="1"/><text x="8" y="307.2" text-anchor="middle">6</text><rect x="7" y="311" width="1" height="1"/><rect x="5" y="321" width="6" height="1"/><rect x="7" y="330" width="1" height="1"/><text x="8" y="345.0" text-anchor="middle">7</text><rect x="7" y="349" width="1" height="1"/><rect x="5" y="359" width="6" height="1"/><rect x="7" y="368" width="1" height="1"/><text x="8" y="382.8" text-anchor="middle">8</text><rect x="7" y="387" width="1" height="1"/><rect x="5" y="396" width="6" height="1"/><rect x="7" y="406" width="1" height="1"/><text x="8" y="420.6" text-anchor="middle">9</text><rect x="7" y="425" width="1" height="1"/><rect x="5" y="434" width="6" height="1"/><rect x="7" y="444" width="1" height="1"/><text x="8" y="458.4" text-anchor="middle">10</text><rect x="7" y="463" width="1" height="1"/><rect x="5" y="472" width="6" height="1"/><rect x="7" y="481" width="1" height="1"/><text x="8" y="496.1" text-anchor="middle">11</text><rect x="7" y="500" width="1" height="1"/><rect x="5" y="510" width="6" height="1"/><rect x="7" y="519" width="1" height="1"/><text x="8" y="533.9" text-anchor="middle">12</text><rect x="7" y="538" width="1" height="1"/><rect x="5" y="548" width="6" height="1"/></svg>

<div class="a" style="left:1167px;top:106px;width:16px;height:601px;background:linear-gradient(90deg,#e2e2e2,#efefef 40%,#f4f4f4)"></div>
<div class="a" style="left:1167px;top:106px;width:16px;height:17px;border:1px solid #a4a4a4;border-radius:2px;background:linear-gradient(90deg,#f3f3f3,#e6e6e6 45%,#d4d4d4 50%,#cdcdcd)"></div>
<svg class="a" style="left:1171px;top:112px" width="8" height="5"><path d="M0 4.5L4 0.5L8 4.5Z" fill="#555"/></svg>
<div class="a" style="left:1167px;top:124px;width:16px;height:250px;border:1px solid #9c9c9c;border-radius:2px;background:linear-gradient(90deg,#f5f5f5,#e9e9e9 45%,#d6d6d6 50%,#cecece)"></div>
<div class="a" style="left:1171px;top:244px;width:8px;height:7px;background:repeating-linear-gradient(#666 0,#666 1px,transparent 1px,transparent 2px)"></div>
<div class="a" style="left:1167px;top:638px;width:16px;height:16px;border:1px solid #a4a4a4;border-radius:2px;background:linear-gradient(90deg,#f3f3f3,#e6e6e6 45%,#d4d4d4 50%,#cdcdcd)"></div>
<svg class="a" style="left:1171px;top:644px" width="8" height="5"><path d="M0 0.5L4 4.5L8 0.5Z" fill="#555"/></svg>
<div class="a" style="left:1167px;top:655px;width:17px;height:17px;border:1px solid #fbfcff;border-right-color:#b4bccb;border-bottom-color:#b4bccb;background:linear-gradient(#f6f9fe,#e8eef8)"></div>
<svg class="a" style="left:1171px;top:660px" width="7" height="7"><path d="M0 3L3.500 0L7 3ZM1 6.500L3.500 4L6 6.500Z" fill="#000"/><rect x="1" y="3" width="5" height="1" fill="#000"/></svg>
<div class="a" style="left:1167px;top:672px;width:17px;height:17px;border:1px solid #fbfcff;border-right-color:#b4bccb;border-bottom-color:#b4bccb;background:linear-gradient(#f6f9fe,#e8eef8)"></div>
<div class="a" style="left:1171.700px;top:676.700px;width:5.600px;height:5.600px;border-radius:3px;background:#c70e5a"></div>
<div class="a" style="left:1167px;top:689px;width:17px;height:18px;border:1px solid #fbfcff;border-right-color:#b4bccb;border-bottom-color:#9aa2b2;background:linear-gradient(#f6f9fe,#e8eef8)"></div>
<svg class="a" style="left:1171px;top:694px" width="7" height="7"><path d="M0 4L3.500 7L7 4ZM1 .5L3.500 3L6 .5Z" fill="#000"/><rect x="1" y="3" width="5" height="1" fill="#000"/></svg>


<div class="a" style="left:8px;top:707px;width:1175px;height:17px;background:linear-gradient(#d5d7eb 0,#e2e4f3 4px,#f0f1fa 9px,#f6f7fd 17px)"></div>
<svg class="a" style="left:14px;top:711px" width="5" height="9"><path d="M4.5 0.5L0.5 4.5L4.5 8.5Z" fill="#444"/></svg>
<svg class="a" style="left:1156px;top:711px" width="5" height="9"><path d="M0.5 0.5L4.5 4.5L0.5 8.5Z" fill="#444"/></svg>

<div class="a" style="left:1183px;top:106px;width:249px;height:618px;background:#e0ebf9"></div>
<div class="a" style="left:1185px;top:395px;width:6px;height:39px;border:1px solid #8f959e;border-radius:3px;background:#fff"></div>
<svg class="a" style="left:1187px;top:412px" width="3" height="5"><path d="M0 0L3 2.5L0 5Z" fill="#8f959e"/></svg>
<div class="a" style="left:1195px;top:109px;width:24px;height:24px;border:1px solid #9aa7b8;border-radius:3px;background:linear-gradient(#ffffff,#f4f7fc)"></div>
<svg class="a" style="left:1198px;top:112px" width="18" height="18" viewBox="0 0 18 18"><circle cx="8.400" cy="8.400" r="7.900" fill="#fff" stroke="#a8645c" stroke-width=".8"/><path d="M8.400 2L10.600 9H6.200Z" fill="#e23a4c"/><path d="M8.400 15.200L10.600 9H6.200Z" fill="#7cb498"/><circle cx="8.400" cy="9" r=".9" fill="#fff"/></svg>
<svg class="a" style="left:1223px;top:112px" width="19" height="18" viewBox="0 0 19 18"><defs><linearGradient id="tg" x1="0" y1="0" x2="0" y2="1"><stop offset="0" stop-color="#ffffff"/><stop offset="1" stop-color="#a9b0bc"/></linearGradient></defs><path d="M12.800 1.400V3.800H11.400V16H9V3.800H7.600V16H5.200V9H4.200A3.800 3.800 0 0 1 4.200 1.400Z" fill="#fdfdff" stroke="#2a3350" stroke-width="1.100" stroke-linejoin="round"/><path d="M10.500 5.200H17.500V8H15.400V16H12.600V8H10.500Z" fill="url(#tg)" stroke="#2a3350" stroke-width="1" stroke-linejoin="round"/></svg>
<svg class="a" style="left:1248px;top:112px" width="19" height="18" viewBox="0 0 19 18"><defs><linearGradient id="a1g" x1="0" y1="0" x2="0" y2="1"><stop offset="0" stop-color="#e4ecfc"/><stop offset="1" stop-color="#8fa6d8"/></linearGradient><linearGradient id="a1h" x1="0" y1="0" x2="0" y2="1"><stop offset="0" stop-color="#f0f2f6"/><stop offset="1" stop-color="#9aa0ac"/></linearGradient></defs><path d="M.5 11.500L10.200 .8H12.400L12.800 16.800H9.600L9.700 14H5.500L3.800 16.800H4L5 13.500H.5ZM6.900 11.500H9.800L9.900 6Z" fill="url(#a1g)" stroke="#2c3f7e" stroke-width="1" stroke-linejoin="round" fill-rule="evenodd"/><path d="M13 7.500L16.300 5V15H18V17H12.800V15H14.300V8.500Z" fill="url(#a1h)" stroke="#3a445c" stroke-width=".9" stroke-linejoin="round"/></svg>
<div class="arr" style="left:1418px;top:119px"></div>
<div class="a" style="left:1195px;top:141px;width:232px;height:1px;background:linear-gradient(90deg,#5f6b7c 0,#6c7888 70%,rgba(108,120,136,0) 100%)"></div>
<div class="t" style="left:1196px;top:152px;letter-spacing:.5px">Document content :</div>
<div class="combo" style="left:1195px;top:174px;width:234px;height:26px"></div>
<div class="cbtn" style="left:1410px;top:175px;width:18px;height:24px"></div>
<div class="arr" style="left:1415px;top:185px"></div>
<div class="t" style="left:1202px;top:180px;letter-spacing:.45px">Headings</div>
<div class="a" style="left:1195px;top:206px;width:234px;height:449px;background:#fff;border:1px solid #8e98a8;border-right-color:#fff;border-bottom-color:#fff"></div>
<div class="a" style="left:1215px;top:210px;width:210px;height:19px;background:#99b4d1"></div>
<div class="a" style="left:1200px;top:212px;width:14px;height:14px;background:#fff;border:1px solid #8a8f96"></div>
<div class="t" style="left:1219px;top:212px">未命名 1</div>
<div class="a" style="left:1195px;top:660px;width:25px;height:27px;border:1px solid #8b8e93;border-radius:3px;background:linear-gradient(#f4f4f4,#ebebeb 48%,#dcdcdc 52%,#d0d0d0);box-shadow:inset 0 0 0 1px rgba(255,255,255,.6)"></div><svg class="a" style="left:1199px;top:665px" width="17" height="17" viewBox="0 0 17 17" fill="#e2e2e2" stroke="#a6a6a6" stroke-width="1"><rect x="1.500" y="2" width="3" height="13"/><path d="M14.500 1.500L6 8.500L14.500 15.500Z"/></svg>
<div class="a" style="left:1226px;top:660px;width:25px;height:27px;border:1px solid #8b8e93;border-radius:3px;background:linear-gradient(#f4f4f4,#ebebeb 48%,#dcdcdc 52%,#d0d0d0);box-shadow:inset 0 0 0 1px rgba(255,255,255,.6)"></div><svg class="a" style="left:1230px;top:665px" width="17" height="17" viewBox="0 0 17 17" fill="#e2e2e2" stroke="#a6a6a6" stroke-width="1"><path d="M12 1.500L3.500 8.500L12 15.500Z"/></svg>
<div class="a" style="left:1257px;top:660px;width:25px;height:27px;border:1px solid #8b8e93;border-radius:3px;background:linear-gradient(#f4f4f4,#ebebeb 48%,#dcdcdc 52%,#d0d0d0);box-shadow:inset 0 0 0 1px rgba(255,255,255,.6)"></div><svg class="a" style="left:1261px;top:665px" width="17" height="17" viewBox="0 0 17 17" fill="#e2e2e2" stroke="#a6a6a6" stroke-width="1"><path d="M5 1.500L13.500 8.500L5 15.500Z"/></svg>
<div class="a" style="left:1288px;top:660px;width:25px;height:27px;border:1px solid #8b8e93;border-radius:3px;background:linear-gradient(#f4f4f4,#ebebeb 48%,#dcdcdc 52%,#d0d0d0);box-shadow:inset 0 0 0 1px rgba(255,255,255,.6)"></div><svg class="a" style="left:1292px;top:665px" width="17" height="17" viewBox="0 0 17 17" fill="#e2e2e2" stroke="#a6a6a6" stroke-width="1"><path d="M2.500 1.500L11 8.500L2.500 15.500Z"/><rect x="12.500" y="2" width="3" height="13"/></svg>
<div class="t" style="left:1196px;top:699px;letter-spacing:.4px">Outline level :</div>
<div class="combo" style="left:1285px;top:693px;width:144px;height:26px"></div>
<div class="cbtn" style="left:1410px;top:694px;width:18px;height:24px"></div>
<div class="arr" style="left:1415px;top:704px"></div>
<div class="t" style="left:1292px;top:699px">只显示 1 至 9 级段落</div>
<div class="a" style="left:8px;top:724px;width:1424px;height:28px;background:linear-gradient(#f0f4fb 0,#eaf0f9 12px,#e1e9f6 22px,#dbe4f3 27px,#9fa7b7 27px,#9fa7b7 28px)"></div>
<div class="a" style="left:13px;top:728px;width:324px;height:19px;border:1px solid #aab0bd;border-right-color:#fbfcff;border-bottom-color:#fbfcff;background:linear-gradient(#f4f7fc,#e9eef8)"></div><div class="t" style="left:17px;top:731px">用于将数据插入文档的命令</div>
<div class="a" style="left:344px;top:728px;width:127px;height:19px;border:1px solid #aab0bd;border-right-color:#fbfcff;border-bottom-color:#fbfcff;background:linear-gradient(#f4f7fc,#e9eef8)"></div><div class="t" style="left:348px;top:731px">第 1 行第 1 列</div>
<div class="a" style="left:478px;top:728px;width:93px;height:19px;border:1px solid #aab0bd;border-right-color:#fbfcff;border-bottom-color:#fbfcff;background:linear-gradient(#f4f7fc,#e9eef8)"></div><div class="t" style="left:482px;top:731px">第 1 节</div>
<div class="a" style="left:578px;top:728px;width:87px;height:19px;border:1px solid #aab0bd;border-right-color:#fbfcff;border-bottom-color:#fbfcff;background:linear-gradient(#f4f7fc,#e9eef8)"></div><div class="t" style="left:582px;top:731px">第 1 章</div>
<div class="a" style="left:672px;top:728px;width:147px;height:19px;border:1px solid #aab0bd;border-right-color:#fbfcff;border-bottom-color:#fbfcff;background:linear-gradient(#f4f7fc,#e9eef8)"></div><div class="t" style="left:676px;top:731px">第 1 页 , 共 1 页</div>
<div class="a" style="left:826px;top:728px;width:136px;height:19px;border:1px solid #aab0bd;border-right-color:#fbfcff;border-bottom-color:#fbfcff;background:linear-gradient(#f4f7fc,#e9eef8)"></div><div class="t" style="left:830px;top:731px">中文 ( 中华人民共和国 )</div>
<div class="a" style="left:969px;top:728px;width:80px;height:19px;border:1px solid #aab0bd;border-right-color:#fbfcff;border-bottom-color:#fbfcff;background:linear-gradient(#f4f7fc,#e9eef8)"></div>
<div class="a" style="left:1056px;top:728px;width:53px;height:19px;border:1px solid #aab0bd;border-right-color:#fbfcff;border-bottom-color:#fbfcff;background:linear-gradient(#f4f7fc,#e9eef8)"></div><div class="t" style="left:1056px;top:731px;width:53px;text-align:center">Ins</div>
<div class="a" style="left:1110px;top:726px;width:24px;height:24px;border:1px solid #98a3b5;border-radius:3px;background:linear-gradient(#ffffff,#f3f6fb)"></div>
<svg class="a" style="left:1114px;top:730px" width="16" height="16" viewBox="0 0 16 16"><rect x="1.5" y="1.5" width="13" height="13" fill="#fff" stroke="#4d5668"/><path d="M4 4.5H12M4 6.5H12M4 8.5H12M4 10.5H12M4 12.5H12" stroke="#3f4656" stroke-width="1"/></svg>
<svg class="a" style="left:1139px;top:730px" width="16" height="16" viewBox="0 0 16 16"><path d="M1 3.5H14M1 5.5H14M1 7.5H14M1 9.5H14M1 11.5H14M1 13.5H14" stroke="#7d8491" stroke-width="1"/></svg>
<svg class="a" style="left:1161px;top:729px" width="18" height="18" viewBox="0 0 18 18"><rect x="1.5" y="1.5" width="15" height="15" fill="#fdfeff" stroke="#5f6f88"/><path d="M4 4.5H14M4 13.5H14" stroke="#6a7488" stroke-width="1"/></svg>
<svg class="a" style="left:1186px;top:730px" width="16" height="16" viewBox="0 0 16 16"><path d="M3 2.5H12M6 5.5H15M6 8.5H15M6 11.5H15M6 13.5H15" stroke="#8a909c" stroke-width="1"/><path d="M1 2.5H2M3 5.5H5M3 8.5H5M3 11.5H5" stroke="#8a909c" stroke-width="1"/></svg>
<svg class="a" style="left:1212px;top:727px" width="150" height="20" viewBox="0 0 150 20"><defs><radialGradient id="zg" cx="50%" cy="30%" r="70%"><stop offset="0" stop-color="#ffffff"/><stop offset="0.6" stop-color="#e9eff7"/><stop offset="1" stop-color="#b8c6d8"/></radialGradient></defs><circle cx="9.5" cy="9.5" r="7" fill="url(#zg)" stroke="#9fb0c6" stroke-width="1"/><path d="M6.5 9.5H12.5" stroke="#c0202a" stroke-width="1.4"/><path d="M20 9.5H130" stroke="#7f8896" stroke-width="1"/><circle cx="74" cy="9.5" r="3.6" fill="#f5c341" stroke="#d9a42a" stroke-width="0.8"/><circle cx="139.5" cy="9.5" r="7" fill="url(#zg)" stroke="#9fb0c6" stroke-width="1"/><path d="M136.5 9.5H142.5M139.5 6.5V12.5" stroke="#9a1a24" stroke-width="1.2"/></svg>
<div class="t" style="left:1377px;top:730px">100%</div>
<div class="a" style="left:244px;top:50px;width:159px;height:370px;background:#f0f0f0;border:1px solid #a6a6a6;border-right-color:#f6f6f6;border-bottom-color:#f6f6f6;box-shadow:3px 3px 1px rgba(0,0,0,.43)"></div>
<div class="a" style="left:251px;top:55px;width:16px;height:16px"><svg width="18" height="18" viewBox="0 0 18 18" style="left:0;top:0;"><rect x="-.5" y="-.5" width="11.500" height="15" fill="#fbf8fc" stroke="#5a6a92" stroke-width="1"/><rect x="0" y="0" width="10.500" height="2.800" fill="#f6d45a"/><path d="M0 3H10.500" stroke="#c8a838" stroke-width=".8"/><text x="4.500" y="13" text-anchor="middle" font-family="Liberation Serif, serif" font-weight="bold" font-size="11.500" fill="#5a0a2a">1</text><circle cx="12.400" cy="11.900" r="4.600" fill="#dfe8fa" stroke="#66789c" stroke-width="1.100"/><path d="M12.400 9V12L14.600 13.600" fill="none" stroke="#4a5a7c" stroke-width="1"/></svg></div>
<div class="t" style="left:273px;top:55px">日期/时间(<u>D</u>)...</div>
<div class="a" style="left:251px;top:77px;width:16px;height:16px"><svg width="18" height="18" viewBox="0 0 18 18" style="left:0;top:0;"><path d="M5.800 .8C3.300 .8 3.500 2.300 3.500 4.300V5.800C3.500 7.300 2.600 7.700 1.300 8C2.600 8.300 3.500 8.700 3.500 10.200V11.700C3.500 13.700 3.300 15.200 5.800 15.200" fill="none" stroke="#69736c" stroke-width="2.300"/><path d="M11.200 .8C13.700 .8 13.500 2.300 13.500 4.300V5.800C13.500 7.300 14.400 7.700 15.700 8C14.400 8.300 13.500 8.700 13.500 10.200V11.700C13.500 13.700 13.700 15.200 11.200 15.200" fill="none" stroke="#69736c" stroke-width="2.300"/><path d="M5.900 1.800H11.100V7H13.600L8.500 13.500L3.400 7H5.900Z" fill="#7ed038" stroke="#4a9a1c" stroke-width=".9" stroke-linejoin="round"/><path d="M6.800 2.700H10.200V6.200H6.800Z" fill="#b8f07a"/></svg></div>
<div class="t" style="left:273px;top:77px">字段(<u>E</u>)...</div>
<div class="a" style="left:251px;top:99px;width:16px;height:16px"><svg width="18" height="18" viewBox="0 0 18 18" style="left:0;top:0;"><defs><linearGradient id="fxg" x1="0" y1="0" x2="0" y2="1"><stop offset="0" stop-color="#dce8fa"/><stop offset="1" stop-color="#8aa8dc"/></linearGradient></defs><g transform="translate(-1.200,-.9) scale(1.070)"><path d="M7.800 1.500C5 .3 2.800 1.500 2.800 4.500V5.500H.8V7.800H2.800V15H5.800V7.800H7.500V5.500H5.800V4.800C5.800 3.600 6.600 3.300 7.800 3.800Z" fill="url(#fxg)" stroke="#4a6cb0" stroke-width="1" stroke-linejoin="round"/><path d="M7.300 7.200H10.200L11.700 9.400L13.200 7.200H16L13.200 11L16.200 15H13.200L11.600 12.600L10 15H7L10.100 11Z" fill="url(#fxg)" stroke="#4a6cb0" stroke-width="1" stroke-linejoin="round"/></g></svg></div>
<div class="t" style="left:273px;top:99px">计算(<u>C</u>)...</div>
<div class="t" style="left:359px;top:99px">F2</div>
<div class="t" style="left:273px;top:121px">标题(<u>A</u>)...</div>
<div class="a" style="left:251px;top:143px;width:16px;height:16px"><svg width="18" height="18" viewBox="0 0 18 18" style="left:0;top:0;"><rect x=".3" y=".8" width="15.500" height="14.500" rx="1.500" fill="#c4c4c4" stroke="#5a5a5a" stroke-width="1"/><path d="M1 15L3.500 12.500H12.500L15 15Z" fill="#8c8c8c"/><path d="M1 1.500L3.500 3.500V12.500L1 15Z" fill="#e6e6e6"/><path d="M15 1.500L12.500 3.500V12.500L15 15Z" fill="#a4a4a4"/><rect x="3.500" y="3" width="9" height="9.500" fill="#f0f0f2" stroke="#7c7c7c" stroke-width=".8"/><path d="M6 5.500H7.500L10.200 10.500M8.300 7.300L5.800 10.500" fill="none" stroke="#3a4668" stroke-width="1.200"/></svg></div>
<div class="t" style="left:273px;top:143px">符号(<u>S</u>)...</div>
<div class="a" style="left:247px;top:165px;width:153px;height:2px;background:linear-gradient(#a8a8a8 0,#a8a8a8 1px,#ffffff 1px,#ffffff 2px)"></div>
<div class="a" style="left:251px;top:174px;width:16px;height:16px"><svg width="18" height="18" viewBox="0 0 18 18" style="left:0;top:0;"><path d="M5 .2H12.500L16.500 4.200V16.300H5Z" fill="#f2f5fc" stroke="#5c6f96" stroke-width="1"/><path d="M12.500 .2V4.200H16.500" fill="#fff" stroke="#5c6f96" stroke-width="1"/><path d="M9.500 7.500H14.500M8 9.500H14.500M8 11.500H14.500M8 13.500H14.500" stroke="#4a64a8" stroke-width="1"/><path d="M2 1H6.800V5.500H9.200L4.400 11.800L-.6 5.500H2Z" fill="#86d23c" stroke="#3f8a16" stroke-width=".9" stroke-linejoin="round"/><path d="M2.800 1.800H6V5H2.800Z" fill="#b9ee80"/></svg></div>
<div class="t" style="left:273px;top:174px">文档(<u>U</u>)...</div>
<div class="t" style="left:273px;top:196px"><span style="letter-spacing:.5px"><u>L</u>abels...</span></div>
<div class="a" style="left:251px;top:218px;width:16px;height:16px"><svg width="18" height="18" viewBox="0 0 18 18" style="left:0;top:0;"><defs><linearGradient id="eg" x1="0" y1="0" x2="0" y2="1"><stop offset="0" stop-color="#ffffff"/><stop offset="1" stop-color="#c8d8f6"/></linearGradient></defs><rect x=".5" y="2.500" width="15.500" height="11" fill="url(#eg)" stroke="#5c6f96" stroke-width="1"/><rect x="10.800" y="4" width="3.400" height="4" fill="#8c0a2c"/><path d="M2.500 8.500H9M2.500 10.500H7" stroke="#4a64a8" stroke-width="1"/></svg></div>
<div class="t" style="left:273px;top:218px">信封(<u>V</u>)...</div>
<div class="a" style="left:247px;top:240px;width:153px;height:2px;background:linear-gradient(#a8a8a8 0,#a8a8a8 1px,#ffffff 1px,#ffffff 2px)"></div>
<div class="a" style="left:251px;top:249px;width:16px;height:16px"><svg width="18" height="18" viewBox="0 0 18 18" style="left:0;top:0;"><text x="9.300" y="15.700" text-anchor="middle" font-family="Liberation Serif, serif" font-weight="bold" font-size="19" fill="#2c2c9c">A</text><path d="M1.500 7.500H6.500M.5 10H5.500M-.5 12.500H4.500M-.8 15H3.500" stroke="#4a4ab4" stroke-width="1"/></svg></div>
<div class="t" style="left:273px;top:249px">智能文本(<u>M</u>)...</div>
<div class="a" style="left:251px;top:271px;width:16px;height:16px"><svg width="18" height="18" viewBox="0 0 18 18" style="left:0;top:0;"><defs><linearGradient id="bmg" x1="0" y1="0" x2="1" y2="0"><stop offset="0" stop-color="#fbe27a"/><stop offset="1" stop-color="#e4a81c"/></linearGradient></defs><path d="M1.500 1H10.500V16.500L6 11.500L1.500 16.500Z" fill="url(#bmg)" stroke="#b88a18" stroke-width=".9" stroke-linejoin="round"/><path d="M11.800 -1.200L13.200 2.200L16.800 2.500L14 4.800L15 8.400L11.800 6.400L8.600 8.400L9.600 4.800L6.800 2.500L10.400 2.200Z" fill="#fdf2a0" stroke="#c89a20" stroke-width=".9" stroke-linejoin="round"/></svg></div>
<div class="t" style="left:273px;top:271px">书签(<u>B</u>)...</div>
<div class="a" style="left:251px;top:293px;width:16px;height:16px"><svg width="18" height="18" viewBox="0 0 18 18" style="left:0;top:0;"><path d="M2.800 1H10.500L14 4.500V15.300H2.800Z" fill="#f0f4fc" stroke="#5c6f96" stroke-width="1"/><path d="M10.500 1V4.500H14" fill="#fff" stroke="#5c6f96" stroke-width=".9"/><path d="M3.500 12H13.500V15H3.500Z" fill="#c8d6f4"/><path d="M4 4.500H9M6.500 2.200V6.800M4.700 2.800L8.300 6.200M8.300 2.800L4.700 6.200" stroke="#d81820" stroke-width="1"/><path d="M9.500 6.500H13V10H15L11.200 14.300L7.500 10H9.500Z" fill="#6cc83a" stroke="#3f8a16" stroke-width=".8" stroke-linejoin="round"/></svg></div>
<div class="t" style="left:273px;top:293px">交叉引用(<u>O</u>)...</div>
<div class="a" style="left:247px;top:315px;width:153px;height:2px;background:linear-gradient(#a8a8a8 0,#a8a8a8 1px,#ffffff 1px,#ffffff 2px)"></div>
<div class="a" style="left:251px;top:324px;width:16px;height:16px"><svg width="18" height="18" viewBox="0 0 18 18" style="left:0;top:0;"><rect x="2.800" y="1" width="10.400" height="14" fill="#eef2fc" stroke="#5c6f96" stroke-width="1"/><rect x="3.300" y="1.500" width="9.400" height="1.300" fill="#d8202c"/><rect x="3.300" y="3.800" width="9.400" height="1.300" fill="#d8202c"/><path d="M5 7.500H11M5 10H11M5 12.500H11" stroke="#2e3c9c" stroke-width="1.300"/></svg></div>
<div class="t" style="left:273px;top:324px">页眉(<u>H</u>)</div>
<div class="a" style="left:251px;top:346px;width:16px;height:16px"><svg width="18" height="18" viewBox="0 0 18 18" style="left:0;top:0;"><rect x="2.800" y=".5" width="10.400" height="14.500" fill="#eef2fc" stroke="#5c6f96" stroke-width="1"/><rect x="3.300" y="11" width="9.400" height="1.300" fill="#d8202c"/><rect x="3.300" y="13.200" width="9.400" height="1.300" fill="#d8202c"/><path d="M5 3H11M5 5.500H11M5 8H11" stroke="#2e3c9c" stroke-width="1.300"/></svg></div>
<div class="t" style="left:273px;top:346px">页脚(<u>F</u>)</div>
<div class="t" style="left:273px;top:368px">脚注(<u>N</u>)</div>
<svg class="a" style="left:390px;top:369px" width="4" height="8"><path d="M0 0L4 4L0 8Z" fill="#000"/></svg>
<div class="a" style="left:247px;top:390px;width:153px;height:2px;background:linear-gradient(#a8a8a8 0,#a8a8a8 1px,#ffffff 1px,#ffffff 2px)"></div>
<div class="t" style="left:273px;top:399px">分隔符(<u>R</u>)</div>
<svg class="a" style="left:390px;top:400px" width="4" height="8"><path d="M0 0L4 4L0 8Z" fill="#000"/></svg>

<svg class="a" style="left:0px;top:4px;mix-blend-mode:darken" width="70" height="70" viewBox="0 0 70 70">
<g opacity="0.86">
<path d="M30 7.500C15 7.500 5.500 18 5.500 30C5.500 39 11 44.500 19 44.500L42 44.500C50 44 55.500 37 55 29C54.500 17 44 7.500 30 7.500Z" fill="#3d8dd8"/>
<path d="M15 27H19.500L17 31V42H15Z" fill="#27509a"/>
<path d="M7.400 48.900C12 50.300 19 51 24.700 50.800C29 50.600 37 48 43.400 44.400C49 41 54 38.500 58.200 36L60.700 38C59 41 57 44 55.300 46.400C52 50.500 46 55 40.500 58.200L38.500 64.200H32.600L29.600 58.200C24 57.500 17 55.500 14.800 54.300C11 52.500 9 51 7.400 48.900Z" fill="#f3a23a"/>
</g>
</svg>
<svg class="a" style="left:0px;top:4px" width="70" height="70" viewBox="0 0 70 70">
<g opacity="0.84">
<path d="M6.500 45C7.500 32 16 24 29 20.500L31 23C19 26.500 11.500 34 10.500 45.500Z" fill="#ffffff"/>
<path d="M6 47.500C12 50 20 50.500 27 49.500L26 47.500C19 48.500 12 48 7 46Z" fill="#ffffff" opacity=".8"/>
<path d="M37.500 41V24L41 18L47.500 24V27L44.500 25V41Z" fill="#ffffff"/>
<path d="M44.500 25L47.500 27C51.500 28 51.500 37 46.500 39.500L44.500 41Z" fill="#e4effa"/>
<path d="M17.500 33L23 28.500L29.500 33V41.500H17.500Z" fill="#f6d9d6"/>
<path d="M19 35H28M19 37.500H28M19 40H28" stroke="#ec9c98" stroke-width="1.100"/>
</g>
</svg>
<div class="t" style="left:66px;top:8px;height:40px;line-height:40px;font-size:27.200px;font-weight:900;color:#3a8fe0;opacity:.82;mix-blend-mode:darken;font-family:'Noto Sans CJK SC',sans-serif;transform-origin:0 50%;transform:skewX(-5deg);-webkit-text-stroke:0.900px #3a8fe0;letter-spacing:-.4px">河东软件园</div>


<div class="t" style="left:67px;top:43px;height:26px;line-height:26px;font-size:20px;font-weight:bold;color:#4ea040;opacity:.8;mix-blend-mode:darken;font-family:'Liberation Serif',serif">www.pc0359.cn</div>

<div class="a" style="left:10px;top:10px;width:16px;height:16px"><svg width="16" height="16" viewBox="0 0 16 16" style="left:0;top:0;"><circle cx="7.5" cy="7.5" r="7.2" fill="#e23a32" stroke="#b8221c" stroke-width=".6"/><path d="M2.2 9.5A5.6 5.6 0 0 0 13 9.8L13 6A5.6 5.6 0 0 0 7 13Z" fill="#2b4a8c"/><circle cx="8.3" cy="8.8" r="4.6" fill="#2f4f94"/><path d="M4.3 3.8H10.8V5.6H8.5V12H6.6V5.6H4.3Z" fill="#fff"/></svg></div>
</body></html>
